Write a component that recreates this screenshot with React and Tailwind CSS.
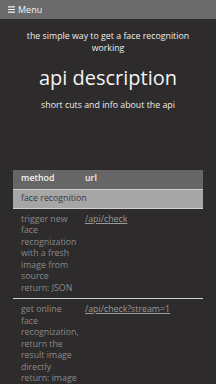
import { Menu } from 'lucide-react';

const rows = [
  {
    text: ['trigger new', 'face', 'recognization', 'with a fresh', 'image from', 'source', 'return: JSON'],
    url: '/api/check',
  },
  {
    text: ['get online', 'face', 'recognization,', 'return the', 'result image', 'directly', 'return: image'],
    url: '/api/check?stream=1',
  },
];

export default function App() {
  return (
    <div className="min-h-screen bg-[#2d2b2c] text-white" style={{ fontFamily: '"Open Sans", "DejaVu Sans", sans-serif' }}>
      <div className="h-[19px] bg-[#6b6b6b] flex items-center px-[7px] gap-[2px] text-[9px] text-[#f2f2f2]">
        <Menu className="w-[9px] h-[9px]" strokeWidth={3} />
        <span>Menu</span>
      </div>

      <div className="px-[12px] text-center">
        <p className="mt-[12px] text-[8.8px] leading-[11.5px] text-[#eeeeee] px-[10px]">
          the simple way to get a face recognition working
        </p>
        <h1 className="mt-[12px] text-[20px] leading-[24px] text-[#f4f4f4]">api description</h1>
        <p className="mt-[10px] text-[8.8px] leading-[11.5px] text-[#eeeeee]">short cuts and info about the api</p>
      </div>

      <div className="mx-[13px] mt-[58px]">
        <div className="flex h-[20px] items-center bg-[#666666] text-[8.8px] font-semibold text-[#f2f2f2] border-b border-[#d0d0d0]">
          <span className="w-[72px] pl-[8px]">method</span>
          <span>url</span>
        </div>
        <div className="flex h-[19px] items-center bg-[#a6a6a6] text-[8.8px] text-[#3a3a3a] pl-[8px] border-b border-[#d0d0d0]">
          face recognition
        </div>
        {rows.map((r, i) => (
          <div key={i} className={'flex pt-[5px] pb-[4px] text-[8.8px] leading-[11.5px] text-[#8a8a8a]' + (i === 0 ? ' border-b border-[#cfcfcf]' : '')}>
            <div className="w-[72px] pl-[8px]">
              {r.text.map((t, j) => (
                <div key={j}>{t}</div>
              ))}
            </div>
            <a className="underline text-[#9a9a9a]">{r.url}</a>
          </div>
        ))}
      </div>
    </div>
  );
}
